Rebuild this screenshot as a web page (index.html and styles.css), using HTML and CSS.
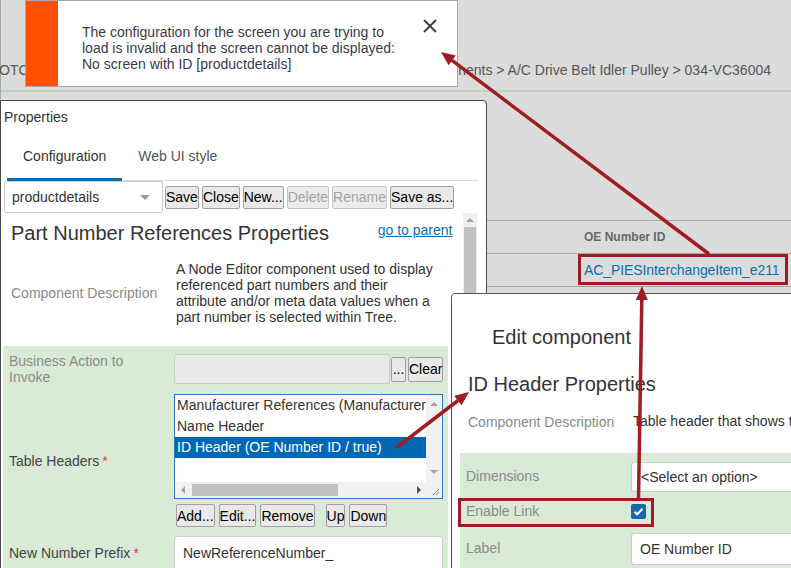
FILE: index.html
```html
<!DOCTYPE html>
<html lang="en">
<head>
<meta charset="utf-8">
<title>Properties</title>
<link rel="stylesheet" href="styles.css">
</head>
<body>
<div class="page">
  <div class="crumbs">
    <span class="crumb-left">OTC</span>
    <span class="crumb-right">Components &gt; A/C Drive Belt Idler Pulley &gt; 034-VC36004</span>
  </div>
  <div class="grid">
    <div class="grid-row"><div class="cell"></div><div class="cell th">OE Number ID</div></div>
    <div class="grid-row"><div class="cell"></div><div class="cell"><span class="link">AC_PIESInterchangeItem_e211</span></div></div>
  </div>
</div>

<section class="props">
  <div class="props-title">Properties</div>
  <div class="tabs">
    <div class="tab active">Configuration</div>
    <div class="tab">Web UI style</div>
  </div>
  <div class="toolbar">
    <div class="select"><span>productdetails</span><span class="caret"></span></div>
    <button class="btn">Save</button>
    <button class="btn">Close</button>
    <button class="btn">New...</button>
    <button class="btn" disabled>Delete</button>
    <button class="btn" disabled>Rename</button>
    <button class="btn">Save as...</button>
  </div>
  <div class="props-body">
    <div class="props-main">
      <div class="pn-head">
        <div class="pn-title">Part Number References Properties</div>
        <span class="goto">go to parent</span>
      </div>
      <div class="desc-row">
        <div class="muted">Component Description</div>
        <div class="desc">A Node Editor component used to display<br>referenced part numbers and their<br>attribute and/or meta data values when a<br>part number is selected within Tree.</div>
      </div>
      <div class="form">
        <div class="frow">
          <div class="muted flabel">Business Action to Invoke</div>
          <div class="field-line">
            <div class="input disabled"></div>
            <button class="btn small">...</button>
            <button class="btn">Clear</button>
          </div>
        </div>
        <div class="frow gap10">
          <div class="flabel strong">Table Headers<span class="req">*</span></div>
          <div>
            <div class="listbox">
              <div class="items">
                <div class="item">Manufacturer References (Manufacturer References / true)</div>
                <div class="item">Name Header</div>
                <div class="item sel">ID Header (OE Number ID / true)</div>
              </div>
              <div class="vbar"><span class="tri up"></span><span class="tri down"></span></div>
              <div class="hbar"><span class="tri left"></span><span class="thumb"></span><span class="tri right"></span></div>
              <div class="corner">
                <svg width="16" height="16" viewBox="0 0 16 16"><path d="M13 7 L7 13 M13 10 L10 13" stroke="#888" stroke-width="1" fill="none"/></svg>
              </div>
            </div>
            <div class="btnrow">
              <button class="btn">Add...</button>
              <button class="btn">Edit...</button>
              <button class="btn">Remove</button>
              <button class="btn up-btn">Up</button>
              <button class="btn">Down</button>
            </div>
          </div>
        </div>
        <div class="frow gap9">
          <div class="flabel strong">New Number Prefix<span class="req">*</span></div>
          <div class="input text">NewReferenceNumber_</div>
        </div>
      </div>
    </div>
    <div class="vscroll"><span class="tri up"></span><span class="sthumb"></span></div>
  </div>
</section>

<section class="dialog">
  <div class="dlg-title">Edit component</div>
  <div class="dlg-h">ID Header Properties</div>
  <div class="dlg-desc">
    <div class="muted">Component Description</div>
    <div class="nowrap">Table header that shows the OE Number ID</div>
  </div>
  <div class="dlg-form">
    <div class="drow">
      <div class="muted">Dimensions</div>
      <div class="input sel-in">&lt;Select an option&gt;</div>
    </div>
    <div class="drow check-row">
      <div class="muted">Enable Link</div>
      <div><span class="checkbox"><svg width="15" height="15" viewBox="0 0 15 15"><path d="M3.5 7.8 L6.2 10.3 L11.5 4.8" stroke="#fff" stroke-width="2" fill="none"/></svg></span></div>
    </div>
    <div class="drow label-row">
      <div class="muted">Label</div>
      <div class="input text2">OE Number ID</div>
    </div>
  </div>
</section>

<div class="toast">
  <div class="toast-bar"></div>
  <div class="toast-msg">The configuration for the screen you are trying to<br>load is invalid and the screen cannot be displayed:<br>No screen with ID [productdetails]</div>
  <div class="toast-close">
    <svg width="14" height="14" viewBox="0 0 14 14"><path d="M1 1 L13 13 M13 1 L1 13" stroke="#3a3a3a" stroke-width="1.8" fill="none"/></svg>
  </div>
</div>

<svg class="annot" width="791" height="568" viewBox="0 0 791 568">
  <g fill="none" stroke="#a01c24" stroke-width="3">
    <rect x="579.5" y="255.5" width="207" height="28"/>
    <rect x="459.5" y="499.5" width="193" height="26"/>
  </g>
  <g stroke="#a01c24" stroke-width="3.5">
    <line x1="709" y1="254" x2="452" y2="60.4"/>
    <line x1="638.5" y1="499" x2="641.8" y2="300"/>
    <line x1="396" y1="448" x2="458" y2="400.5"/>
  </g>
  <g fill="#a01c24">
    <polygon points="441,52 455.8,55.6 448.6,65.2"/>
    <polygon points="642,286 647.8,300.1 635.8,299.9"/>
    <polygon points="469,392 461.5,405.3 454.2,395.7"/>
  </g>
</svg>
</body>
</html>
```
FILE: styles.css
```css
* { box-sizing: border-box; }
html, body { margin: 0; padding: 0; }
body {
  width: 791px;
  height: 568px;
  overflow: hidden;
  position: relative;
  background: #dcdcdc;
  font-family: "Liberation Sans", Arial, sans-serif;
  font-size: 14px;
  color: #333;
}

/* background page */
.page { height: 100%; border-left: 1px solid #a9a9a9; }
.crumbs {
  height: 92px;
  padding: 62px 20px 0 0;
  line-height: 16px;
  border-bottom: 2px solid #b7d6bd;
  display: flex;
  justify-content: space-between;
  color: #555;
  white-space: nowrap;
}
.crumb-left { margin-left: -2px; }
.grid { margin-top: 128px; border-top: 1px solid #a8a8a8; }
.grid-row {
  display: grid;
  grid-template-columns: 577px 1fr;
  height: 33px;
  border-bottom: 1px solid #a8a8a8;
  align-items: center;
}
.th { font-weight: bold; font-size: 12px; color: #666; padding-left: 6px; }
.link { color: #0b6fb0; margin-left: 6px; letter-spacing: -0.1px; }

/* buttons */
.btn {
  font-family: "Liberation Sans", Arial, sans-serif;
  font-size: 14px;
  color: #000;
  height: 23px;
  padding: 0;
  border: 1px solid #a0a0a0;
  border-radius: 2px;
  background: #e9e9e9;
  line-height: 20px;
}
.btn:disabled { color: #a3a3a3; border-color: #c6c6c6; background: #ececec; }

/* properties panel */
.props {
  position: absolute;
  left: 0;
  top: 100px;
  width: 487px;
  height: 480px;
  background: #fff;
  border: 1px solid #4a4a4a;
  border-top-right-radius: 4px;
  display: flex;
  flex-direction: column;
}
.props-title { padding: 8px 3px 10px; line-height: 16px; }
.tabs { display: flex; margin: 0 8px 0 6px; border-bottom: 1px solid #ddd; }
.tab {
  padding: 13px 16px 14px;
  line-height: 16px;
  border-bottom: 3px solid transparent;
  margin-bottom: -1px;
  color: #555;
}
.tab.active { color: #333; border-bottom-color: #0a6cb0; }
.toolbar { display: flex; align-items: center; gap: 3px; padding-left: 3px; height: 32px; flex: none; }
.select {
  width: 159px;
  height: 32px;
  margin-right: -1px;
  border: 1px solid #ccc;
  border-radius: 2px;
  display: flex;
  align-items: center;
  justify-content: space-between;
  padding: 0 12px 0 7px;
}
.caret { width: 0; height: 0; border-left: 5px solid transparent; border-right: 5px solid transparent; border-top: 5px solid #999; }

.props-body { display: flex; flex: 1; min-height: 0; }
.props-main { flex: 0 0 461px; }
.vscroll { flex: 0 0 14px; background: #f1f1f1; display: flex; flex-direction: column; align-items: center; }
.vscroll .tri.up { margin-top: 5px; }
.sthumb { width: 12px; height: 300px; background: #c1c1c1; margin-top: 5px; }

.tri { width: 0; height: 0; display: block; }
.tri.up { border-left: 4px solid transparent; border-right: 4px solid transparent; border-bottom: 4px solid #a3a3a3; }
.tri.down { border-left: 4px solid transparent; border-right: 4px solid transparent; border-top: 4px solid #a3a3a3; }
.tri.left { border-top: 4px solid transparent; border-bottom: 4px solid transparent; border-right: 4px solid #a3a3a3; }
.tri.right { border-top: 4px solid transparent; border-bottom: 4px solid transparent; border-left: 4px solid #505050; }

.pn-head { display: flex; justify-content: space-between; align-items: flex-start; padding: 8px 11px 0 10px; }
.pn-title { font-size: 20px; line-height: 24px; }
.goto { margin-top: 1px; color: #0b6fb0; text-decoration: underline; line-height: 16px; }
.desc-row { display: grid; grid-template-columns: 165px 1fr; align-items: center; padding-left: 10px; margin-top: 16px; }
.desc { line-height: 16px; }
.muted { color: #8a8a8a; }
.strong { color: #444; }
.req { color: #e03a3a; margin-left: 3px; }

.form { background: #d9ead6; margin: 21px 15px 0 2px; padding: 7px 5px 0 6px; height: 240px; }
.frow { display: grid; grid-template-columns: 165px 1fr; align-items: center; }
.flabel { line-height: 16px; padding-right: 14px; }
.gap10 { margin-top: 9px; }
.gap9 { margin-top: 9px; }
.field-line { display: flex; align-items: center; }
.input { border: 1px solid #ccc; border-radius: 3px; background: #fff; }
.input.disabled { width: 216px; height: 30px; background: #eaeaea; }
.field-line .btn.small { width: 15px; height: 25px; margin-left: 1px; padding: 0; }
.field-line .btn { height: 25px; margin-left: 2px; padding: 0; }
.input.text { height: 34px; padding: 8px 8px; line-height: 16px; color: #333; }

.listbox {
  height: 105px;
  border: 1px solid #2b78c5;
  display: grid;
  grid-template-columns: 1fr 16px;
  grid-template-rows: 87px 16px;
  background: #fff;
}
.items { overflow: hidden; }
.item { line-height: 21px; padding-left: 2px; white-space: nowrap; color: #333; }
.item.sel { background: #0068b3; color: #fff; }
.vbar { background: #f1f1f1; display: flex; flex-direction: column; align-items: center; justify-content: space-between; padding: 7px 0 8px; }
.hbar { background: #f1f1f1; display: flex; align-items: center; padding: 0 5px 0 6px; }
.hbar .thumb { width: 146px; height: 12px; background: #c1c1c1; margin-left: 7px; flex: none; }
.hbar .tri.right { margin-left: auto; }
.corner { background: #f1f1f1; }
.corner svg { display: block; }
.btnrow { display: flex; gap: 4px; margin-top: 5px; padding-left: 2px; }
.btnrow .btn { padding: 0; }
.btnrow .up-btn { margin-left: 7px; }

/* edit dialog */
.dialog {
  position: absolute;
  left: 451px;
  top: 293px;
  width: 345px;
  height: 285px;
  background: #fff;
  border: 1px solid #555;
  border-top-left-radius: 4px;
  overflow: hidden;
}
.dlg-title { font-size: 20px; line-height: 24px; padding: 31px 0 0 40px; }
.dlg-h { font-size: 20px; line-height: 24px; margin-top: 23px; padding-left: 16px; }
.dlg-desc { display: grid; grid-template-columns: 165px 1fr; padding-left: 16px; margin-top: 18px; line-height: 16px; align-items: center; }
.nowrap { white-space: nowrap; margin-top: -3px; }
.dlg-form { margin: 23px 0 0 8px; background: #d9ead6; padding: 9px 0 10px 6px; }
.drow { display: grid; grid-template-columns: 165px 1fr; align-items: center; }
.drow > .muted { margin-top: -2px; }
.input.sel-in { height: 30px; padding: 0 9px; line-height: 28px; color: #333; border-right: none; border-radius: 3px 0 0 3px; }
.check-row { margin-top: 6px; height: 27px; }
.checkbox { width: 15px; height: 15px; background: #1669ab; border-radius: 2px; display: block; }
.checkbox svg { display: block; }
.label-row { margin-top: 8px; }
.input.text2 { height: 32px; padding: 0 8px; line-height: 30px; border-right: none; border-radius: 3px 0 0 3px; }

/* toast */
.toast {
  position: absolute;
  left: 25px;
  top: 0;
  width: 433px;
  height: 87px;
  background: #fff;
  border: 1px solid #a8a8a8;
  display: flex;
}
.toast-bar { width: 32px; background: #ff5000; flex: none; }
.toast-msg { flex: 1; padding: 23px 0 0 24px; line-height: 16px; color: #3a3a4c; }
.toast-close { padding: 18px 20px 0 0; }
.toast-close svg { display: block; }

.annot { position: absolute; left: 0; top: 0; pointer-events: none; }
```
